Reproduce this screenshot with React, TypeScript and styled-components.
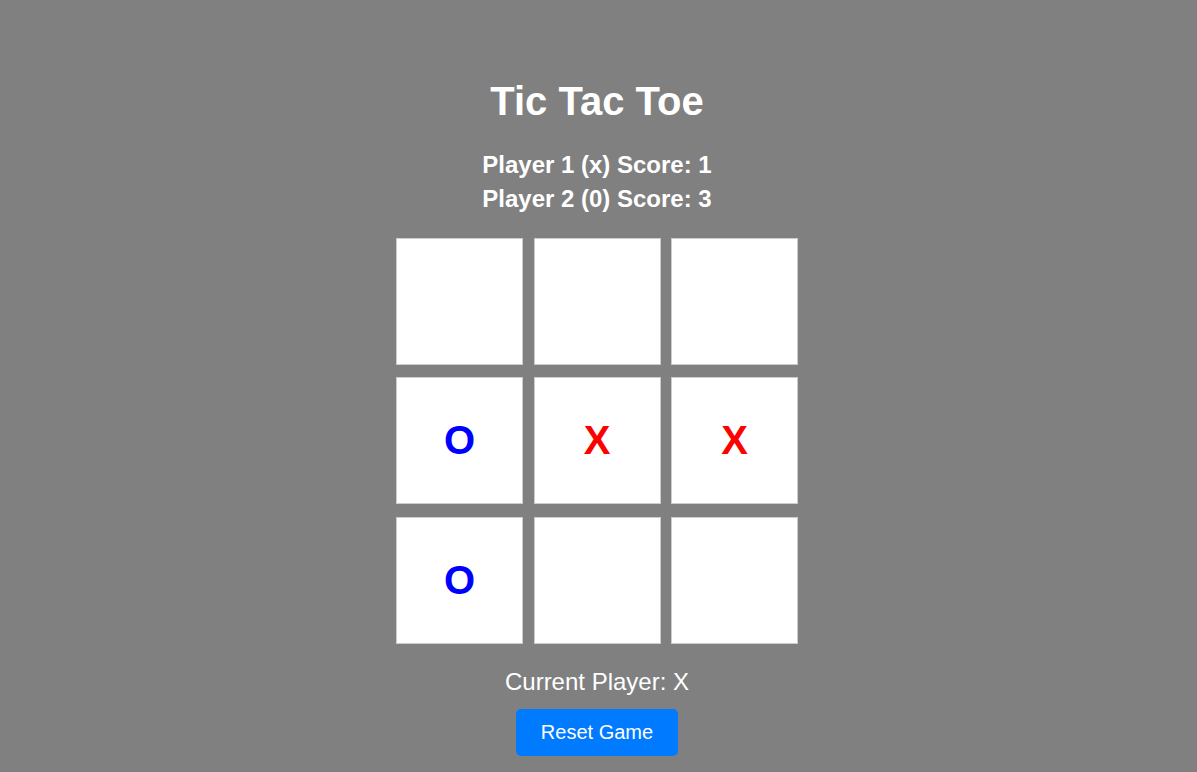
import React from "react";
import styled, { createGlobalStyle } from "styled-components";

const GlobalStyle = createGlobalStyle`
  html, body {
    margin: 0;
    padding: 0;
    background: #808080;
    font-family: "Liberation Sans", Arial, sans-serif;
  }
`;

const Page = styled.div`
  display: flex;
  flex-direction: column;
  align-items: center;
  padding-top: 78px;
  padding-right: 3px;
  min-height: 772px;
  box-sizing: border-box;
  color: #ffffff;
`;

const Title = styled.h1`
  margin: 0;
  font-size: 40px;
  font-weight: bold;
  line-height: 46px;
`;

const Scores = styled.div`
  margin-top: 24px;
  display: flex;
  flex-direction: column;
  align-items: center;
`;

const ScoreLine = styled.div`
  font-size: 24px;
  font-weight: bold;
  line-height: 33.6px;
`;

const Board = styled.div`
  margin-top: 22.6px;
  display: grid;
  grid-template-columns: repeat(3, 127px);
  grid-template-rows: repeat(3, 127px);
  column-gap: 10.5px;
  row-gap: 12.5px;
`;

const Cell = styled.button<{ $mark: "X" | "O" | "" }>`
  box-sizing: border-box;
  width: 127px;
  height: 127px;
  margin: 0;
  padding: 0;
  background: #ffffff;
  border: 1px solid #cccccc;
  display: flex;
  align-items: center;
  justify-content: center;
  font-family: "Liberation Sans", Arial, sans-serif;
  font-size: 40px;
  font-weight: bold;
  color: ${(p) => (p.$mark === "X" ? "#ff0000" : "#0000ff")};
  cursor: pointer;
`;

const Status = styled.div`
  margin-top: 24.6px;
  font-size: 24px;
  line-height: 27.6px;
`;

const ResetButton = styled.button`
  margin-top: 13px;
  padding: 12px 25px;
  background: #007bff;
  color: #ffffff;
  border: none;
  border-radius: 5px;
  font-family: "Liberation Sans", Arial, sans-serif;
  font-size: 20px;
  line-height: 23px;
  cursor: pointer;
`;

const board: ("X" | "O" | "")[] = ["", "", "", "O", "X", "X", "O", "", ""];

export default function App() {
  return (
    <>
      <GlobalStyle />
      <Page>
        <Title>Tic Tac Toe</Title>
        <Scores>
          <ScoreLine>Player 1 (x) Score: 1</ScoreLine>
          <ScoreLine>Player 2 (0) Score: 3</ScoreLine>
        </Scores>
        <Board>
          {board.map((m, i) => (
            <Cell key={i} $mark={m}>
              {m}
            </Cell>
          ))}
        </Board>
        <Status>Current Player: X</Status>
        <ResetButton>Reset Game</ResetButton>
      </Page>
    </>
  );
}
